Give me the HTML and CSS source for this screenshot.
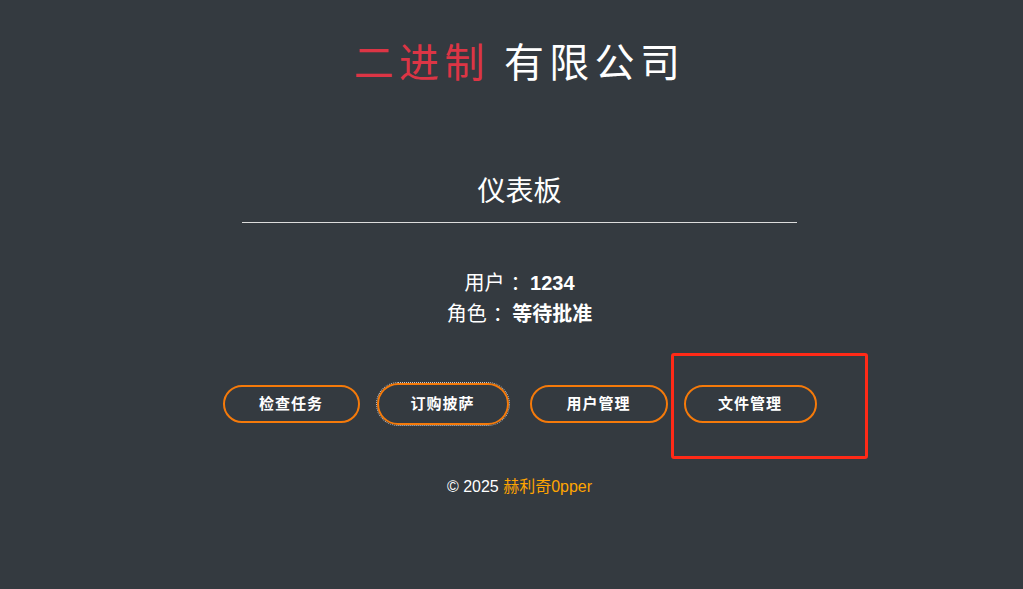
FILE: index.html
```html
<!DOCTYPE html>
<html lang="zh">
<head>
<meta charset="utf-8">
<title>仪表板</title>
<link rel="stylesheet" href="styles.css">
</head>
<body>
<div class="page">
  <h1 class="brand"><span class="brand-red">二进制</span> 有限公司</h1>
  <h2 class="section-title">仪表板</h2>
  <div class="divider"></div>
  <div class="info">
    <div class="info-line">用户<span class="colon">：</span> <strong>1234</strong></div>
    <div class="info-line">角色<span class="colon">：</span> <strong>等待批准</strong></div>
  </div>
  <div class="actions">
    <button class="btn btn-1">检查任务</button>
    <button class="btn btn-2">订购披萨</button>
    <button class="btn btn-3">用户管理</button>
    <button class="btn btn-4">文件管理</button>
  </div>
  <footer class="footer">© 2025 <span class="footer-name">赫利奇0pper</span></footer>
</div>
<div class="highlight-box"></div>
</body>
</html>
```
FILE: styles.css
```css
html, body {
  margin: 0;
  padding: 0;
  background: #343a40;
  height: 100%;
  overflow: hidden;
}
body {
  position: relative;
  font-family: "Liberation Sans", "Noto Sans CJK JP", sans-serif;
  color: #ffffff;
}
.page {
  padding-left: 16px;
  display: flex;
  flex-direction: column;
  align-items: center;
}
.brand {
  margin: 0;
  padding-top: 36px;
  font-size: 40px;
  line-height: 48px;
  font-weight: 400;
  letter-spacing: 5.3px;
  font-family: "Noto Sans CJK JP", sans-serif;
}
.brand-red {
  color: #dc3545;
}
.section-title {
  margin: 85px 0 0;
  font-size: 28px;
  line-height: 40px;
  font-weight: 400;
  font-family: "Noto Sans CJK JP", sans-serif;
}
.divider {
  margin-top: 13px;
  width: 555px;
  border-top: 1px solid #dcdcdc;
}
.info {
  margin-top: 45px;
  text-align: center;
  font-size: 20px;
  line-height: 31px;
}
.colon {
  margin-left: 6px;
  margin-right: -6px;
}
.info strong {
  font-weight: 700;
}
.actions {
  margin-top: 53px;
  display: flex;
  align-items: center;
  gap: 16px;
  height: 42px;
}
.btn {
  box-sizing: border-box;
  height: 38px;
  border: 2px solid #f57a0a;
  border-radius: 20px;
  background: transparent;
  color: #ffffff;
  font-family: "Noto Sans CJK JP", "Liberation Sans", sans-serif;
  font-size: 15px;
  line-height: 20px;
  font-weight: 700;
  letter-spacing: 1px;
  padding: 0 0 2px;
  text-align: center;
}
.btn-1 { width: 137px; }
.btn-2 {
  width: 132px;
  height: 42px;
  border-radius: 22px;
  margin-left: 1px;
  margin-right: 5px;
  outline: 1px dotted #c8c8c8;
  outline-offset: 0;
}
.btn-3 { width: 138px; }
.btn-4 { width: 133px; }
.footer {
  margin-top: 50px;
  font-size: 16px;
  line-height: 24px;
}
.footer-name {
  color: #ffa500;
}
.highlight-box {
  position: absolute;
  left: 671px;
  top: 353px;
  width: 197px;
  height: 106px;
  box-sizing: border-box;
  border: 3px solid #ff2a17;
  border-radius: 3px;
}
```
